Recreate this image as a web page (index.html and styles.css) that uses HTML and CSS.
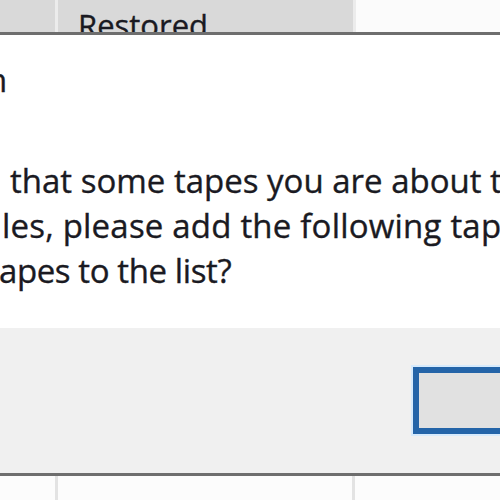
FILE: index.html
```html
<!DOCTYPE html>
<html>
<head>
<meta charset="utf-8">
<link rel="stylesheet" href="styles.css">
</head>
<body>
<div class="page">
  <div class="strip">
    <div class="cell cell-a"></div>
    <div class="divider"></div>
    <div class="cell cell-b"><span class="col-title">Restored</span></div>
    <div class="divider"></div>
    <div class="cell cell-c"></div>
  </div>
  <div class="dialog">
    <div class="content">
      <div class="title"><span class="title-frag">n</span></div>
      <div class="message">
        <div class="line l1">that some tapes you are about t</div>
        <div class="line l2">les, please add the following tap</div>
        <div class="line l3">apes to the list?</div>
      </div>
    </div>
    <div class="footer">
      <button class="btn"></button>
    </div>
  </div>
  <div class="rows">
    <div class="rcell rcell-a"></div>
    <div class="vline"></div>
    <div class="rcell rcell-b"></div>
    <div class="vline"></div>
    <div class="rcell rcell-c"></div>
  </div>
</div>
</body>
</html>
```
FILE: styles.css
```css
html, body {
  margin: 0;
  padding: 0;
  width: 500px;
  height: 500px;
  overflow: hidden;
  background: #fff;
}
.page {
  width: 500px;
  height: 500px;
  display: flex;
  flex-direction: column;
  font-family: "Open Sans", "Noto Sans", sans-serif;
  color: #1a1a22;
  -webkit-text-stroke: 0.35px #1a1a22;
  overflow: hidden;
}
.strip {
  height: 32px;
  display: flex;
  flex: none;
  overflow: hidden;
}
.cell-a { width: 55px; background: #d9d9d9; }
.divider { width: 3px; background: #ececec; }
.cell-b {
  width: 295px;
  background: #d9d9d9;
  padding-left: 20px;
  box-sizing: border-box;
  padding-top: 4px;
}
.cell-c { flex: 1; background: #fbfbfb; }
.col-title {
  font-size: 31px;
  line-height: 42px;
  white-space: nowrap;
}
.dialog {
  flex: none;
  border-top: 3px solid #6e6e6e;
  border-bottom: 3px solid #6e6e6e;
  display: flex;
  flex-direction: column;
}
.content {
  height: 293px;
  background: #fff;
  padding-top: 22px;
  box-sizing: border-box;
  overflow: hidden;
}
.title {
  font-size: 33px;
  line-height: 45px;
  white-space: nowrap;
}
.title-frag {
  margin-left: -13px;
}
.message {
  margin-top: 56px;
  font-size: 33px;
  line-height: 45px;
  white-space: nowrap;
}
.l1 { padding-left: 10px; }
.l2 { padding-left: 2px; letter-spacing: 0.2px; }
.l3 { margin-left: -1px; letter-spacing: -0.4px; }
.footer {
  height: 145px;
  background: #f0f0f0;
  display: flex;
  align-items: flex-start;
  padding-top: 39px;
  padding-left: 413px;
  box-sizing: border-box;
}
.btn {
  width: 110px;
  height: 67px;
  flex: none;
  border: 6px solid #2464a8;
  background: #e1e1e1;
  box-shadow: 0 0 0 2px #d6eafc;
  padding: 0;
  margin: 0;
}
.rows {
  flex: 1;
  display: flex;
  background: #fcfcfc;
}
.rcell-a { width: 55px; }
.rcell-b { width: 294px; }
.rcell-c { flex: 1; }
.vline { width: 3px; background: #e3e3e3; }
```
